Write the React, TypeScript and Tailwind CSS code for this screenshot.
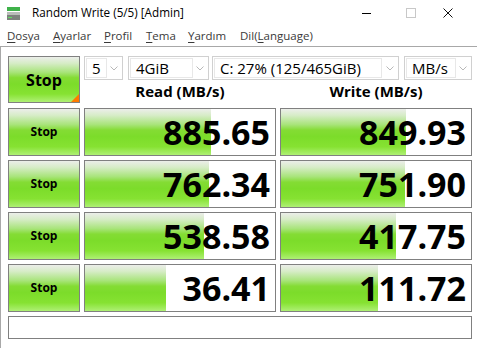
import React from "react";

const GREEN =
  "bg-[linear-gradient(to_bottom,#eceeea_0%,#d6ecc6_14%,#a8e47a_34%,#84dc34_46%,#7cdc2a_60%,#86e232_82%,#aef074_100%)]";

const rows = [
  { r: "885.65", w: "849.93", rf: 126, wf: 125 },
  { r: "762.34", w: "751.90", rf: 124, wf: 124 },
  { r: "538.58", w: "417.75", rf: 119, wf: 115 },
  { r: "36.41", w: "111.72", rf: 81, wf: 97 },
];

function Chevron() {
  return (
    <svg width="8" height="5" viewBox="0 0 8 5" className="shrink-0">
      <polyline points="0.5,0.5 4,4 7.5,0.5" fill="none" stroke="#b8b8b8" strokeWidth="1" />
    </svg>
  );
}

function Combo({ w, inner, text }: { w: string; inner: string; text: string }) {
  return (
    <div className={`${w} h-[24px] border border-[#d0d0d0] bg-white flex items-center p-[1px]`}>
      <div className={`${inner} h-full border border-[#e8e8e8] flex items-center pl-[5px] text-[15px] leading-none text-black`}>
        {text}
      </div>
      <div className="flex-1 flex items-center justify-center">
        <Chevron />
      </div>
    </div>
  );
}

function Bar({ value, fill }: { value: string; fill: number }) {
  return (
    <div className="relative w-[192px] h-[48px] border border-[#808080] bg-white flex items-center justify-end pr-[5px] overflow-hidden">
      <div className={`absolute left-0 top-0 bottom-0 ${GREEN}`} style={{ width: fill }} />
      <span className="relative text-[34px] font-bold leading-none text-black">{value}</span>
    </div>
  );
}

function SmallStop() {
  return (
    <div className={`w-[72px] h-[48px] border border-[#808080] ${GREEN} flex items-center justify-center text-[12px] font-bold text-black`}>
      Stop
    </div>
  );
}

function M({ w, first, rest }: { w: string; first: string; rest: string }) {
  return (
    <span className={`${w} shrink-0`}>
      <span className="underline underline-offset-2 decoration-1">{first}</span>
      {rest}
    </span>
  );
}

export default function App() {
  return (
    <div
      className="w-[477px] h-[348px] bg-white overflow-hidden text-black"
      style={{ fontFamily: '"Open Sans", "Noto Sans", sans-serif' }}
    >
      {/* Title bar */}
      <div className="h-[26px] flex items-center pl-[7px]">
        <svg width="13" height="13" viewBox="0 0 13 13" className="shrink-0">
          <rect x="0" y="0" width="13" height="4" fill="#3fb24a" />
          <rect x="0" y="5" width="13" height="3" fill="#b9bdb9" />
          <rect x="0" y="8" width="13" height="5" fill="#7d827d" />
          <rect x="1" y="10" width="4" height="1" fill="#5fe05f" />
        </svg>
        <span className="ml-[12px] text-[11.7px] leading-none">Random Write (5/5) [Admin]</span>
        <div className="ml-auto flex items-center pr-[24px]">
          <div className="w-[9px] h-[1px] bg-black" />
          <div className="ml-[35px] w-[10px] h-[10px] border border-[#c8c8c8]" />
          <svg width="10" height="10" viewBox="0 0 10 10" className="ml-[27px]">
            <path d="M0.5 0.5 L9.5 9.5 M9.5 0.5 L0.5 9.5" stroke="#111" strokeWidth="1" />
          </svg>
        </div>
      </div>

      {/* Menu bar */}
      <div className="h-[21px] flex items-center pl-[7px] text-[11.5px] leading-none text-[#3a3a3a] border-b border-[#a8a8a8]">
        <M w="w-[46px]" first="D" rest="osya" />
        <M w="w-[51px]" first="A" rest="yarlar" />
        <M w="w-[42px]" first="P" rest="rofil" />
        <M w="w-[42px]" first="T" rest="ema" />
        <M w="w-[52px]" first="Y" rest="ardım" />
        <span className="shrink-0">
          Dil(<span className="underline underline-offset-2 decoration-1">L</span>anguage)
        </span>
      </div>

      {/* Content */}
      <div className="h-[301px] border-l border-[#a8a8a8] pl-[7px] pt-[9px]">
        <div className="flex gap-[4px]">
          <div className={`relative w-[72px] h-[47px] border border-[#808080] ${GREEN} flex items-center justify-center text-[16px] font-bold`}>
            Stop
            <div className="absolute right-0 bottom-0 w-[8px] h-[8px] bg-[#ff7a00] [clip-path:polygon(100%_0,100%_100%,0_100%)]" />
          </div>
          <div className="flex flex-col w-[388px]">
            <div className="flex h-[24px]">
              <Combo w="w-[39px]" inner="w-[21px]" text="5" />
              <div className="ml-[5px]">
                <Combo w="w-[81px]" inner="w-[63px]" text="4GiB" />
              </div>
              <div className="ml-[3px]">
                <Combo w="w-[187px]" inner="w-[168px]" text="C: 27% (125/465GiB)" />
              </div>
              <div className="ml-[5px]">
                <Combo w="w-[68px]" inner="w-[50px]" text="MB/s" />
              </div>
            </div>
            <div className="flex gap-[4px] h-[23px] items-center text-[15px] font-bold leading-none">
              <div className="w-[192px] text-center">Read (MB/s)</div>
              <div className="w-[192px] text-center">Write (MB/s)</div>
            </div>
          </div>
        </div>

        <div className="mt-[5px] flex flex-col gap-[4px]">
          {rows.map((row, i) => (
            <div key={i} className="flex gap-[4px]">
              <SmallStop />
              <Bar value={row.r} fill={row.rf} />
              <Bar value={row.w} fill={row.wf} />
            </div>
          ))}
        </div>

        <div className="mt-[4px] w-[464px] h-[23px] border border-[#808080] bg-white" />
      </div>
    </div>
  );
}
